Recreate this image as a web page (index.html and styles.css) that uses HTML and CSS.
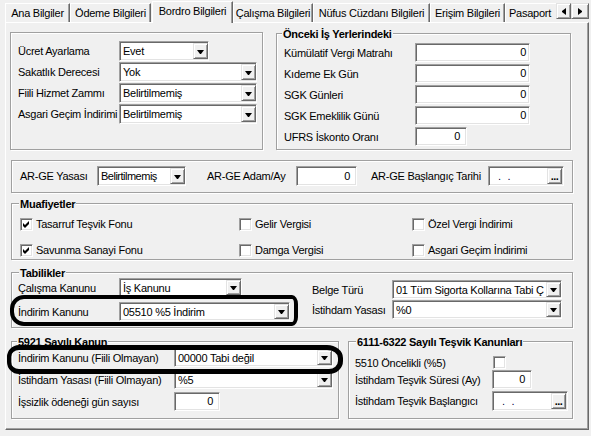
FILE: index.html
```html
<!DOCTYPE html>
<html lang="tr">
<head>
    <meta charset="UTF-8">
    <title>Bordro Bilgileri</title>
    <link rel="stylesheet" href="styles.css">
</head>
<body>
<div class="window">
    <div class="tabbar">
        <div class="tabs">
            <div class="tab tab-ana">Ana Bilgiler</div>
            <div class="tab tab-odeme">Ödeme Bilgileri</div>
            <div class="tab tab-active">Bordro Bilgileri</div>
            <div class="tab tab-calisma">Çalışma Bilgileri</div>
            <div class="tab tab-nufus">Nüfus Cüzdanı Bilgileri</div>
            <div class="tab tab-erisim">Erişim Bilgileri</div>
            <div class="tab tab-pasaport">Pasaport</div>
        </div>
        <div class="tab-scroll">
            <span class="scroll-btn"><i class="arrow-left"></i></span>
            <span class="scroll-btn scroll-right"><i class="arrow-right"></i></span>
        </div>
    </div>

    <div class="page">
        <!-- top: payroll settings + previous employers -->
        <div class="top-row">
            <div class="frame payroll-box">
                <div class="row">
                    <span class="lbl">Ücret Ayarlama</span>
                    <div class="combo combo-short"><span class="combo-text">Evet</span><span class="drop"></span></div>
                </div>
                <div class="row">
                    <span class="lbl">Sakatlık Derecesi</span>
                    <div class="combo combo-long"><span class="combo-text">Yok</span><span class="drop"></span></div>
                </div>
                <div class="row">
                    <span class="lbl">Fiili Hizmet Zammı</span>
                    <div class="combo combo-long"><span class="combo-text">Belirtilmemiş</span><span class="drop"></span></div>
                </div>
                <div class="row">
                    <span class="lbl">Asgari Geçim İndirimi</span>
                    <div class="combo combo-long"><span class="combo-text">Belirtilmemiş</span><span class="drop"></span></div>
                </div>
            </div>

            <div class="frame prev-box">
                <div class="group-title title-prev">Önceki İş Yerlerindeki</div>
                <div class="group-body">
                    <div class="row"><span class="lbl">Kümülatif Vergi Matrahı</span><div class="field field-prev">0</div></div>
                    <div class="row"><span class="lbl">Kıdeme Ek Gün</span><div class="field field-prev">0</div></div>
                    <div class="row"><span class="lbl">SGK Günleri</span><div class="field field-prev">0</div></div>
                    <div class="row"><span class="lbl">SGK Emeklilik Günü</span><div class="field field-prev">0</div></div>
                    <div class="row"><span class="lbl">UFRS İskonto Oranı</span><div class="field field-ufrs">0</div></div>
                </div>
            </div>
        </div>

        <!-- AR-GE -->
        <div class="frame arge-box">
            <span class="lbl arge-lbl-1">AR-GE Yasası</span>
            <div class="combo combo-arge"><span class="combo-text">Belirtilmemiş</span><span class="drop"></span></div>
            <span class="lbl arge-lbl-2">AR-GE Adam/Ay</span>
            <div class="field field-arge">0</div>
            <span class="lbl arge-lbl-3">AR-GE Başlangıç Tarihi</span>
            <div class="date"><span class="date-text">. .</span><span class="date-btn">...</span></div>
        </div>

        <!-- Muafiyetler -->
        <div class="frame muaf-box">
            <div class="group-title title-muaf">Muafiyetler</div>
            <div class="group-body muaf-grid">
                <div class="check-item"><span class="chk"><svg viewBox="0 0 9 9" width="9" height="9"><polygon points="1,3 3,5 7,1 7,4 3,8 1,6" fill="#000"/></svg></span>Tasarruf Teşvik Fonu</div>
                <div class="check-item"><span class="chk"></span>Gelir Vergisi</div>
                <div class="check-item"><span class="chk"></span>Özel Vergi İndirimi</div>
                <div class="check-item"><span class="chk"><svg viewBox="0 0 9 9" width="9" height="9"><polygon points="1,3 3,5 7,1 7,4 3,8 1,6" fill="#000"/></svg></span>Savunma Sanayi Fonu</div>
                <div class="check-item"><span class="chk"></span>Damga Vergisi</div>
                <div class="check-item"><span class="chk"></span>Asgari Geçim İndirimi</div>
            </div>
        </div>

        <!-- Tabilikler -->
        <div class="frame tabi-box">
            <div class="group-title title-tabi">Tabilikler</div>
            <div class="group-body tabi-cols">
                <div class="tabi-left">
                    <div class="row">
                        <span class="lbl">Çalışma Kanunu</span>
                        <div class="combo combo-kanun"><span class="combo-text">İş Kanunu</span><span class="drop"></span></div>
                    </div>
                    <div class="row">
                        <span class="lbl">İndirim Kanunu</span>
                        <div class="combo combo-indirim"><span class="combo-text">05510 %5 İndirim</span><span class="drop"></span></div>
                    </div>
                </div>
                <div class="tabi-right">
                    <div class="row">
                        <span class="lbl">Belge Türü</span>
                        <div class="combo combo-belge"><span class="combo-text">01 Tüm Sigorta Kollarına Tabi Ç</span><span class="drop"></span></div>
                    </div>
                    <div class="row">
                        <span class="lbl">İstihdam Yasası</span>
                        <div class="combo combo-belge"><span class="combo-text">%0</span><span class="drop"></span></div>
                    </div>
                </div>
            </div>
        </div>

        <!-- bottom: 5921 + 6111-6322 -->
        <div class="bottom-row">
            <div class="frame law-box">
                <div class="group-title title-law">5921 Sayılı Kanun</div>
                <div class="group-body">
                    <div class="row">
                        <span class="lbl">İndirim Kanunu (Fiili Olmayan)</span>
                        <div class="combo combo-law"><span class="combo-text">00000 Tabi değil</span><span class="drop"></span></div>
                    </div>
                    <div class="row">
                        <span class="lbl">İstihdam Yasası (Fiili Olmayan)</span>
                        <div class="combo combo-law"><span class="combo-text">%5</span><span class="drop"></span></div>
                    </div>
                    <div class="row">
                        <span class="lbl">İşsizlik ödeneği gün sayısı</span>
                        <div class="field field-issiz">0</div>
                    </div>
                </div>
            </div>

            <div class="frame incent-box">
                <div class="group-title title-incent">6111-6322 Sayılı Teşvik Kanunları</div>
                <div class="group-body">
                    <div class="row row-check">
                        <span class="lbl">5510 Öncelikli (%5)</span>
                        <span class="chk chk-incent"></span>
                    </div>
                    <div class="row row-sure">
                        <span class="lbl">İstihdam Teşvik Süresi (Ay)</span>
                        <div class="field field-sure">0</div>
                    </div>
                    <div class="row row-start">
                        <span class="lbl">İstihdam Teşvik Başlangıcı</span>
                        <div class="date"><span class="date-text">. .</span><span class="date-btn">...</span></div>
                    </div>
                </div>
            </div>
        </div>
    </div>

    <!-- hand-drawn highlight marks -->
    <div class="mark mark-1"></div>
    <div class="mark mark-2"></div>
</div>
</body>
</html>
```

FILE: styles.css
```css
/* Reset */
* {
    margin: 0;
    padding: 0;
    box-sizing: border-box;
}

body {
    background-color: #f0f0f0;
    font-family: "Liberation Sans", Arial, sans-serif;
    font-size: 11px;
    letter-spacing: -0.25px;
    color: #000;
}

.window {
    position: relative;
    width: 591px;
    height: 436px;
    overflow: hidden;
}

/* Tab strip */
.tabbar {
    display: flex;
    height: 22px;
    padding-left: 5px;
}

.tabs {
    display: flex;
    align-items: flex-start;
    width: 551px;
    height: 23px;
    overflow: hidden;
    position: relative;
    z-index: 1;
}

.tab {
    flex: none;
    height: 19px;
    margin-top: 3px;
    padding-top: 2px;
    line-height: 15px;
    text-align: center;
    white-space: nowrap;
    border: 1px solid;
    border-bottom: 0;
    border-color: #fff #696969 transparent #fff;
    box-shadow: inset -1px 0 0 #a0a0a0;
}

.tab-ana { width: 65px; }
.tab-odeme { width: 81px; }
.tab-calisma { width: 80px; }
.tab-nufus { width: 117px; }
.tab-erisim { width: 75px; }

.tab-active {
    width: 81px;
    height: 22px;
    margin-top: 1px;
    margin-left: 1px;
    background-color: #f0f0f0;
}

.tab-pasaport {
    width: 62px;
    text-align: left;
    padding-left: 3px;
}

.tab-scroll {
    display: flex;
    margin-top: 3px;
    height: 16px;
}

.scroll-btn {
    display: flex;
    align-items: center;
    justify-content: center;
    width: 15px;
    height: 16px;
    background-color: #f0f0f0;
    border: 1px solid;
    border-color: #e3e3e3 #696969 #696969 #e3e3e3;
    box-shadow: inset 1px 1px 0 #fff, inset -1px -1px 0 #a0a0a0;
}

.scroll-right {
    width: 18px;
}

.arrow-left,
.arrow-right {
    width: 0;
    height: 1px;
    border-top: 3px solid transparent;
    border-bottom: 3px solid transparent;
    box-sizing: content-box;
}

.arrow-left { border-right: 4px solid #000; }
.arrow-right { border-left: 4px solid #000; }

/* Tab page */
.page {
    width: 584px;
    height: 408px;
    margin-left: 5px;
    border: 1px solid;
    border-color: #fff #696969 #696969 #fff;
    box-shadow: inset -1px -1px 0 #a0a0a0;
    padding: 9px 0 0 4px;
}

/* Etched frames and group boxes */
.frame {
    border: 1px solid #a0a0a0;
    box-shadow: inset 1px 1px 0 #fff, 1px 1px 0 #fff;
}

.group-title {
    width: fit-content;
    height: 13px;
    line-height: 13px;
    margin: -6px 0 -7px 0;
    padding: 0 1px;
    background-color: #f0f0f0;
    font-weight: bold;
    white-space: nowrap;
}

.row {
    display: flex;
    align-items: center;
}

.lbl {
    flex: none;
    white-space: nowrap;
}

/* Combo boxes */
.combo {
    display: flex;
    align-items: center;
    flex: none;
    height: 20px;
    background-color: #fff;
    border: 1px solid;
    border-color: #a0a0a0 #fff #fff #a0a0a0;
    box-shadow: inset 1px 1px 0 #696969, inset -1px -1px 0 #e3e3e3;
    padding-left: 3px;
}

.combo-text {
    flex: 1;
    overflow: hidden;
    white-space: nowrap;
}

.drop {
    display: flex;
    align-items: center;
    justify-content: center;
    flex: none;
    align-self: stretch;
    width: 15px;
    margin: 1px 0;
    background-color: #f0f0f0;
    border: 1px solid;
    border-color: #e3e3e3 #696969 #696969 #e3e3e3;
    box-shadow: inset 1px 1px 0 #fff, inset -1px -1px 0 #a0a0a0;
}

.drop::after {
    content: "";
    width: 1px;
    height: 0;
    box-sizing: content-box;
    border-top: 4px solid #000;
    border-left: 3px solid transparent;
    border-right: 3px solid transparent;
    margin-top: 1px;
}

/* Text fields */
.field {
    flex: none;
    height: 19px;
    line-height: 17px;
    background-color: #fff;
    border: 1px solid;
    border-color: #a0a0a0 #fff #fff #a0a0a0;
    box-shadow: inset 1px 1px 0 #696969, inset -1px -1px 0 #e3e3e3;
    text-align: right;
    padding-right: 6px;
}

/* Date pickers */
.date {
    display: flex;
    align-items: center;
    flex: none;
    width: 76px;
    height: 20px;
    background-color: #fff;
    border: 1px solid;
    border-color: #a0a0a0 #fff #fff #a0a0a0;
    box-shadow: inset 1px 1px 0 #696969, inset -1px -1px 0 #e3e3e3;
    padding: 0 1px 0 9px;
}

.date-text {
    flex: 1;
    color: #000040;
    word-spacing: 4px;
    line-height: 12px;
}

.date-btn {
    flex: none;
    align-self: stretch;
    width: 15px;
    margin: 1px 0;
    background-color: #f0f0f0;
    border: 1px solid;
    border-color: #e3e3e3 #696969 #696969 #e3e3e3;
    box-shadow: inset 1px 1px 0 #fff, inset -1px -1px 0 #a0a0a0;
    font-size: 11px;
    font-weight: bold;
    line-height: 11px;
    text-align: center;
    letter-spacing: -0.6px;
    padding-top: 2px;
}

/* Check boxes */
.chk {
    display: flex;
    flex: none;
    width: 13px;
    height: 13px;
    padding: 1px;
    background-color: #fff;
    border: 1px solid;
    border-color: #a0a0a0 #fff #fff #a0a0a0;
    box-shadow: inset 1px 1px 0 #696969, inset -1px -1px 0 #e3e3e3;
}

/* Top row */
.top-row {
    display: flex;
    align-items: flex-start;
}

.payroll-box {
    width: 253px;
    height: 118px;
    padding: 8px 0 0 7px;
}

.payroll-box .row {
    height: 20px;
    margin-bottom: 1px;
}

.payroll-box .lbl { width: 101px; }
.combo-short { width: 90px; }
.combo-long { width: 138px; }

.prev-box {
    width: 295px;
    height: 117px;
    margin: 1px 0 0 13px;
    padding-left: 7px;
}

.title-prev { margin-left: -2px; }

.prev-box .group-body { padding-top: 9px; }

.prev-box .row {
    height: 19px;
    margin-bottom: 2px;
}

.prev-box .lbl { width: 131px; }

.field-prev {
    width: 115px;
    padding-right: 3px;
}

.field-ufrs { width: 52px; }

/* AR-GE */
.arge-box {
    display: flex;
    align-items: flex-start;
    width: 562px;
    height: 33px;
    margin: 10px 0 0 1px;
    padding: 5px 0 0 8px;
}

.arge-box .lbl { line-height: 20px; }
.arge-lbl-1 { width: 77px; }
.combo-arge { width: 89px; letter-spacing: -0.5px; }
.arge-lbl-2 { width: 89px; margin-left: 21px; }
.field-arge { width: 61px; height: 20px; line-height: 18px; }
.arge-lbl-3 { width: 117px; margin-left: 14px; }

/* Muafiyetler */
.muaf-box {
    width: 562px;
    height: 57px;
    margin: 10px 0 0 1px;
    padding-left: 8px;
}

.title-muaf { margin-left: -1px; }

.muaf-grid {
    display: grid;
    grid-template-columns: 219px 173px auto;
    row-gap: 12px;
    padding-top: 13px;
}

.check-item {
    display: flex;
    align-items: center;
    gap: 3px;
    height: 14px;
    white-space: nowrap;
}

/* Tabilikler */
.tabi-box {
    width: 562px;
    height: 56px;
    margin: 12px 0 0 1px;
    padding-left: 6px;
}

.title-tabi { margin-left: 1px; }

.tabi-cols {
    display: flex;
}

.tabi-left {
    width: 294px;
    padding-top: 5px;
}

.tabi-left .row {
    height: 19px;
    margin-bottom: 5px;
}

.tabi-left .lbl { width: 101px; }
.tabi-left .combo { height: 19px; }
.combo-kanun { width: 123px; }
.combo-indirim { width: 171px; }

.tabi-right {
    padding-top: 7px;
}

.tabi-right .row {
    height: 19px;
    margin-bottom: 1px;
}

.tabi-right .lbl { width: 80px; }

.combo-belge {
    width: 170px;
    height: 19px;
}

/* Bottom row */
.bottom-row {
    display: flex;
    align-items: flex-start;
    margin: 13px 0 0 1px;
}

.law-box {
    width: 328px;
    height: 78px;
    padding-left: 6px;
}

.title-law { margin-left: -1px; }

.law-box .group-body { padding-top: 6px; }

.law-box .row {
    height: 19px;
    margin-bottom: 3px;
}

.law-box .lbl { width: 156px; }

.combo-law {
    width: 159px;
    height: 19px;
}

.field-issiz { width: 46px; }

.incent-box {
    width: 225px;
    height: 78px;
    margin-left: 9px;
    padding-left: 6px;
}

.title-incent { margin-left: 1px; }

.incent-box .group-body { padding-top: 14px; }

.incent-box .lbl { width: 137px; }

.row-check { height: 13px; }
.row-sure { height: 19px; margin-top: 1px; }
.row-start { height: 20px; margin-top: 2px; }

.chk-incent { margin-left: 1px; }
.field-sure { width: 40px; }

/* Hand-drawn highlight marks over the screenshot */
.mark {
    position: absolute;
    border: 4px solid #000;
    z-index: 5;
}

.mark-1 {
    left: 10px;
    top: 295px;
    width: 288px;
    height: 31px;
    border-radius: 14px 6px 6px 14px / 14px 9px 9px 14px;
}

.mark-2 {
    left: 7px;
    top: 345px;
    width: 336px;
    height: 29px;
    border-width: 5px 5px 5px 4px;
    border-radius: 12px 16px 14px 12px / 12px 13px 13px 12px;
}
```
